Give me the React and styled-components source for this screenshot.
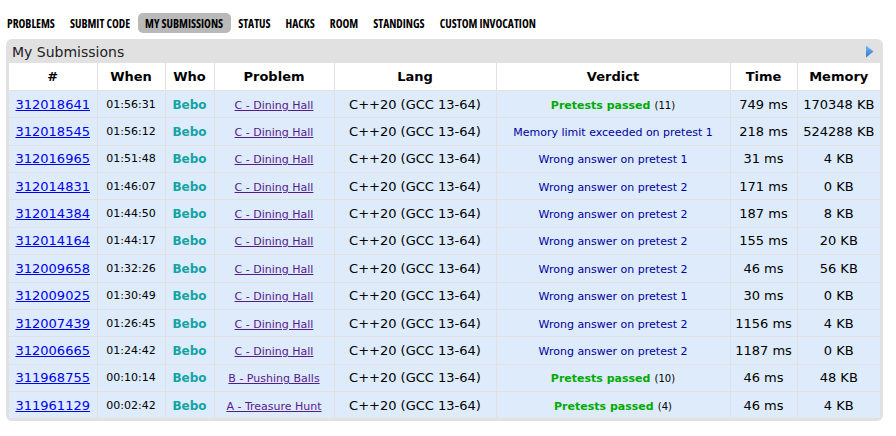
import React from "react";
import styled, { createGlobalStyle } from "styled-components";

const GlobalStyle = createGlobalStyle`
    body {
        margin: 0;
        background: #fff;
        font-family: "DejaVu Sans", Verdana, sans-serif;
        color: #000;
    }
`

const Nav = styled.ul`
    display: flex;
    list-style: none;
    margin: 0;
    padding: 13px 0 0 0;
    height: 20px;
`

const NavItem = styled.li`
    display: flex;
    align-items: center;
    padding: 0 8px 0 7px;
    height: 20px;
    font-family: "Open Sans", sans-serif;
    font-stretch: 75%;
    font-weight: 700;
    font-size: 11.5px;
    color: #000;
    border-radius: 5px;
    background: ${props => props.active ? '#b9b9b9' : 'transparent'};
`

const Panel = styled.div`
    margin: 6px 0 0 6px;
    width: 877px;
    box-sizing: border-box;
    background: #e1e1e1;
    border-radius: 6px;
    padding: 0 3px 3px 3px;
`

const PanelHead = styled.div`
    display: flex;
    align-items: center;
    justify-content: space-between;
    height: 24px;
    padding: 1px 6px 0 3px;
    box-sizing: border-box;
`

const PanelTitle = styled.div`
    font-size: 14px;
    color: #222;
`

const Table = styled.table`
    width: 871px;
    table-layout: fixed;
    border-collapse: collapse;
`

const Th = styled.th`
    height: 27px;
    padding: 0;
    background: #fff;
    font-size: 13px;
    font-weight: 700;
    text-align: center;
    border-left: 1px solid #e1e1e1;
    border-bottom: 1px solid #e1e1e1;
    &:first-child { border-left: none; }
`

const Td = styled.td`
    height: 26.36px;
    padding: 0;
    background: #ddebfb;
    text-align: center;
    font-size: ${props => props.small ? '11px' : '13px'};
    border-left: 1px solid #e1e1e1;
    border-top: 1px solid #e1e1e1;
    white-space: nowrap;
    &:first-child { border-left: none; }
`

const IdLink = styled.a`
    color: #0000ee;
    text-decoration: underline;
    font-size: 13px;
`

const Who = styled.span`
    color: #14a3a3;
    font-weight: 700;
    font-size: 12px;
`

const ProblemLink = styled.a`
    color: #551a8b;
    text-decoration: underline;
    font-size: 11px;
`

const Passed = styled.span`
    color: #00aa00;
    font-weight: 700;
    font-size: 11px;
`

const Count = styled.span`
    color: #000;
    font-size: 10px;
`

const Rejected = styled.span`
    color: #0000a0;
    font-size: 11px;
`

const Arrow = () => (
    <svg width="9" height="13" viewBox="0 0 9 13">
        <defs>
            <linearGradient id="ar" x1="0" y1="0" x2="0" y2="1">
                <stop offset="0" stopColor="#7fb6ef" />
                <stop offset="1" stopColor="#2d76d2" />
            </linearGradient>
        </defs>
        <path d="M1 0.5 L8.5 6.5 L1 12.5 Z" fill="url(#ar)" />
    </svg>
)

const navItems = ['PROBLEMS', 'SUBMIT CODE', 'MY SUBMISSIONS', 'STATUS', 'HACKS', 'ROOM', 'STANDINGS', 'CUSTOM INVOCATION']

const columns = [
    ['#', 88], ['When', 68], ['Who', 49], ['Problem', 120],
    ['Lang', 162], ['Verdict', 234], ['Time', 67], ['Memory', 83]
]

const WA = (n) => ({ ok: false, text: `Wrong answer on pretest ${n}` })

const submissions = [
    ['312018641', '01:56:31', 'C - Dining Hall', { ok: true, n: 11 }, '749 ms', '170348 KB'],
    ['312018545', '01:56:12', 'C - Dining Hall', { ok: false, text: 'Memory limit exceeded on pretest 1' }, '218 ms', '524288 KB'],
    ['312016965', '01:51:48', 'C - Dining Hall', WA(1), '31 ms', '4 KB'],
    ['312014831', '01:46:07', 'C - Dining Hall', WA(2), '171 ms', '0 KB'],
    ['312014384', '01:44:50', 'C - Dining Hall', WA(2), '187 ms', '8 KB'],
    ['312014164', '01:44:17', 'C - Dining Hall', WA(2), '155 ms', '20 KB'],
    ['312009658', '01:32:26', 'C - Dining Hall', WA(2), '46 ms', '56 KB'],
    ['312009025', '01:30:49', 'C - Dining Hall', WA(1), '30 ms', '0 KB'],
    ['312007439', '01:26:45', 'C - Dining Hall', WA(2), '1156 ms', '4 KB'],
    ['312006665', '01:24:42', 'C - Dining Hall', WA(2), '1187 ms', '0 KB'],
    ['311968755', '00:10:14', 'B - Pushing Balls', { ok: true, n: 10 }, '46 ms', '48 KB'],
    ['311961129', '00:02:42', 'A - Treasure Hunt', { ok: true, n: 4 }, '46 ms', '4 KB'],
]

const Verdict = ({ verdict }) => (
    verdict.ok
        ? <><Passed>Pretests passed</Passed> <Count>({verdict.n})</Count></>
        : <Rejected>{verdict.text}</Rejected>
)

const App = () => {

    return (
        <>
        <GlobalStyle />
        <Nav>
            {navItems.map(item => (
                <NavItem key={item} active={item === 'MY SUBMISSIONS'}>{item}</NavItem>
            ))}
        </Nav>
        <Panel>
            <PanelHead>
                <PanelTitle>My Submissions</PanelTitle>
                <Arrow />
            </PanelHead>
            <Table>
                <colgroup>
                    {columns.map(([name, w]) => <col key={name} style={{ width: w }} />)}
                </colgroup>
                <thead>
                    <tr>
                        {columns.map(([name]) => <Th key={name}>{name}</Th>)}
                    </tr>
                </thead>
                <tbody>
                    {submissions.map(([id, when, problem, verdict, time, mem]) => (
                        <tr key={id}>
                            <Td><IdLink href="#">{id}</IdLink></Td>
                            <Td small>{when}</Td>
                            <Td><Who>Bebo</Who></Td>
                            <Td><ProblemLink href="#">{problem}</ProblemLink></Td>
                            <Td>C++20 (GCC 13-64)</Td>
                            <Td><Verdict verdict={verdict} /></Td>
                            <Td>{time}</Td>
                            <Td>{mem}</Td>
                        </tr>
                    ))}
                </tbody>
            </Table>
        </Panel>
        </>
    )

}

export default App
